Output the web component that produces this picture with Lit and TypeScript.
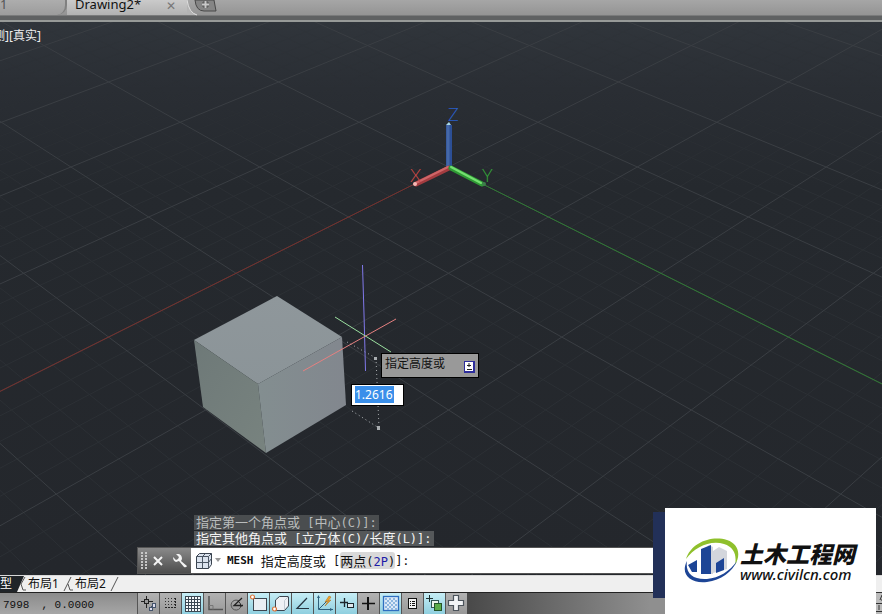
import { LitElement, html, svg, css } from "lit";
import { customElement } from "lit/decorators.js";
import { classMap } from "lit/directives/class-map.js";

/** Splits mixed text so Latin runs use the console face and Han runs the CJK one. */
const mixed = (text: string) =>
  (text.match(/[\x20-\x7e]+|[^\x20-\x7e]+/g) ?? []).map((run) =>
    run.charCodeAt(0) < 128
      ? html`<span class="latin">${run}</span>`
      : html`<span class="han">${run}</span>`
  );

/** Perspective projection of a ground-plane point (u along X, v along Y). */
const project = (u: number, v: number): [number, number] => {
  const s = u + v;
  const w = 1 - 0.0556 * s;
  return [448.5 + (94.4 * (v - u)) / w, (167 + 37.95 * s) / w - 22];
};

const groundLine = (kind: string, a: [number, number], b: [number, number]) => {
  const [x1, y1] = project(...a);
  const [x2, y2] = project(...b);
  return svg`<line class=${kind} x1=${x1} y1=${y1} x2=${x2} y2=${y2} />`;
};

const STEPS = Array.from({ length: 91 }, (_, i) => i - 45);

@customElement("cad-viewport")
class CadViewport extends LitElement {
  static styles = css`
    :host { display: block; width: 100%; height: 100%; }
    svg { display: block; width: 100%; height: 100%; }
    .minor { stroke: #2c3035; stroke-width: 1; }
    .major { stroke: #3a3e43; stroke-width: 1; }
    .x-line { stroke: #77302c; stroke-width: 1; }
    .y-line { stroke: #2f7a33; stroke-width: 1; }
    .dots { fill: none; stroke: #a9adb0; stroke-width: 1; stroke-dasharray: 1 3; }
    text { font: 300 18px Lato, "Open Sans", sans-serif; }
  `;

  render() {
    return svg`
      <svg viewBox="0 0 882 553" preserveAspectRatio="xMidYMid slice" role="img" aria-label="3D">
        <defs>
          <linearGradient id="ground" x1="0" y1="0" x2="0" y2="1">
            <stop offset="0" stop-color="#30353b" />
            <stop offset="0.12" stop-color="#2a2e34" />
            <stop offset="0.3" stop-color="#25292e" />
            <stop offset="1" stop-color="#24272c" />
          </linearGradient>
          <linearGradient id="fade" x1="0" y1="0" x2="0" y2="1">
            <stop offset="0" stop-color="#fff" stop-opacity="0.1" />
            <stop offset="0.3" stop-color="#fff" stop-opacity="1" />
          </linearGradient>
          <mask id="haze"><rect width="882" height="553" fill="url(#fade)" /></mask>
          <linearGradient id="top" x1="0" y1="0" x2="0" y2="1">
            <stop offset="0" stop-color="#8f979b" /><stop offset="1" stop-color="#8b9498" />
          </linearGradient>
          <linearGradient id="left" x1="0" y1="0" x2="1" y2="1">
            <stop offset="0" stop-color="#6e7978" /><stop offset="1" stop-color="#78837f" />
          </linearGradient>
          <linearGradient id="right" x1="0" y1="0" x2="1" y2="0">
            <stop offset="0" stop-color="#838e90" /><stop offset="1" stop-color="#82878e" />
          </linearGradient>
        </defs>
        <rect width="882" height="553" fill="url(#ground)" />
        <g mask="url(#haze)">
          ${STEPS.filter((n) => n % 5 && n < 30).map((n) => [
            groundLine("minor", [n / 5, -8], [n / 5, Math.min(9, 15 - n / 5)]),
            groundLine("minor", [-8, n / 5], [Math.min(9, 15 - n / 5), n / 5]),
          ])}
        </g>
        ${STEPS.filter((n) => n % 5 === 0 && n < 30).map((n) => [
          groundLine("major", [n / 5, -8], [n / 5, 9]),
          groundLine("major", [-8, n / 5], [9, n / 5]),
        ])}
        ${groundLine("x-line", [0, 0], [8, 0])}
        ${groundLine("y-line", [0, 0], [0, 8])}

        <g stroke-linecap="round">
          <path d="M449 146V103" stroke="#2c4f96" stroke-width="6" stroke-linecap="butt" />
          <path d="M448 146V103" stroke="#4568a8" stroke-width="3" stroke-linecap="butt" />
          <path d="M446 103h5l-2-3z" fill="#a9d8e8" />
          <path d="M449 146L416 162" stroke="#a33c40" stroke-width="5" />
          <path d="M448 145L416 161" stroke="#cf6668" stroke-width="2" />
          <circle cx="415" cy="162" r="2" fill="#f5b8b4" />
          <path d="M451 146L482 162" stroke="#2f9a35" stroke-width="5" />
          <path d="M451 145L481 161" stroke="#74e070" stroke-width="2" />
          <circle cx="484" cy="162" r="2" fill="#3d7f4a" />
        </g>
        <text x="448" y="99" fill="#2a5fc8">Z</text>
        <text x="410" y="160" fill="#cf4a48">X</text>
        <text x="482" y="160" fill="#35a83a">Y</text>

        <path d="M194 318L277 274L342 315L258 362Z" fill="url(#top)" />
        <path d="M194 318L258 362L266 431L203 385Z" fill="url(#left)" />
        <path d="M258 362L342 315L346 383L266 431Z" fill="url(#right)" />

        <path class="dots" d="M347 320L376 336" />
        <path class="dots" d="M376 336L379 406" />
        <path class="dots" d="M352 389L379 406" />
        <path d="M374 335h3v3h-3zM377 404h3v4h-3z" fill="#a9adb0" />
        <path d="M362.500 243L364 292L365.500 349" fill="none" stroke="#8078ea" />
        <path d="M303 349L396 297" stroke="#e58080" />
        <path d="M335 295L391 330" stroke="#9be0a0" />
      </svg>`;
  }
}

interface Tool { name: string; on: boolean; art: unknown; }

const TOOLS: Tool[] = [
  { name: "推断约束", on: false, art: svg`<path d="M3 8.500h12M8.500 3v12" stroke="#222"/><rect x="6.500" y="6.500" width="4" height="4" fill="#999" stroke="#222"/><path d="M13 14l2-2" stroke="#44536b"/><rect x="14.500" y="10.500" width="3" height="4" fill="#dde" stroke="#44536b"/><rect x="11.500" y="14.500" width="3" height="3" fill="#dde" stroke="#44536b"/>` },
  { name: "捕捉", on: false, art: svg`<g stroke="#333" stroke-dasharray="1 2"><path d="M5 5.500h10M5 8.500h10M5 11.500h10"/></g><path d="M15.500 5v10M5 14.500h11" stroke="#222" stroke-dasharray="2 1"/>` },
  { name: "栅格", on: true, art: svg`<rect x="3" y="3" width="15" height="15" fill="#f7fafc"/><path d="M3.500 3v15M6.500 3v15M9.500 3v15M12.500 3v15M15.500 3v15M18.500 3v15M3 3.500h16M3 6.500h16M3 9.500h16M3 12.500h16M3 15.500h16M3 18.500h16" stroke="#3b4853"/>` },
  { name: "正交", on: false, art: svg`<path d="M5 3v13.500h14" fill="none" stroke="#555" stroke-width="1.500"/><path d="M5 12.500h4v4" fill="none" stroke="#777"/>` },
  { name: "极轴", on: false, art: svg`<path d="M13 8a5 5 0 1 0 2 5" fill="none" stroke="#555"/><path d="M16 5L8 12.500h9" fill="none" stroke="#222" stroke-width="1.300"/><path d="M12 8q3 2 3 6" fill="none" stroke="#222"/>` },
  { name: "对象捕捉", on: true, art: svg`<rect x="5.500" y="5.500" width="13" height="12" fill="#e9eef3" stroke="#3d4650"/><circle cx="4.500" cy="4" r="2" fill="#fff" stroke="#d9743a" stroke-width="1.200"/>` },
  { name: "三维捕捉", on: true, art: svg`<path d="M5.500 7l4-3.500h9V13l-4 4.500h-9z" fill="#eef1f5" stroke="#3d4650"/><path d="M14.500 17V7.500l4-4" fill="none" stroke="#c2cad2"/><circle cx="4.500" cy="16" r="2" fill="#fff" stroke="#d9743a" stroke-width="1.200"/>` },
  { name: "对象追踪", on: true, art: svg`<path d="M15 5L5 15.500h12" fill="none" stroke="#26333f" stroke-width="1.200"/>` },
  { name: "动态UCS", on: true, art: svg`<path d="M4.500 3v13.500H19M5 16L15 6" fill="none" stroke="#2f5f7c"/><path d="M3 5l1.500-3L6 5M16 15l3 1.500-3 1.500" fill="#2f5f7c"/><path d="M15 3l-4 6 3-1-3 5 6-6-3 1 3-4z" fill="#f2a52c" stroke="#a86a1a" stroke-width="0.500"/>` },
  { name: "动态输入", on: true, art: svg`<path d="M4 9.500h8M8.500 5v9" stroke="#1c242b" stroke-width="1.300"/><rect x="11.500" y="10.500" width="6" height="4" fill="#dfe9ee" stroke="#1c242b"/>` },
  { name: "线宽", on: false, art: svg`<path d="M4 10.500h13" stroke="#111" stroke-width="1.500"/><path d="M10 4v13" stroke="#111" stroke-width="2"/>` },
  { name: "透明度", on: true, art: svg`<rect x="3.500" y="3.500" width="15" height="14" fill="#dbe9f7" stroke="#2e6fc0" stroke-width="1.300"/><g fill="none" stroke="#8cb6df" stroke-width="2" stroke-dasharray="2 2"><path d="M5 6h12M7 8h10M5 10h12M7 12h10M5 14h12M7 16h10"/></g>` },
  { name: "快捷特性", on: false, art: svg`<rect x="6.500" y="5.500" width="8" height="10" fill="#f4f4f4" stroke="#111"/><path d="M8 8.500h1M10 8.500h3M8 10.500h1M10 10.500h3M8 12.500h1M10 12.500h3" stroke="#111"/>` },
  { name: "选择循环", on: true, art: svg`<path d="M2 5.500h7M5.500 2v7" stroke="#233"/><rect x="7.500" y="7.500" width="7" height="7" fill="#eef3ee" stroke="#355"/><rect x="10.500" y="10.500" width="7" height="7" fill="#5cab4b" stroke="#24552a"/>` },
  { name: "注释监视", on: false, art: svg`<path d="M7.500 2.500h5v5h5v5h-5v5h-5v-5h-5v-5h5z" fill="#f2f4f6" stroke="#4c545c" stroke-width="1.200"/>` },
];

@customElement("app-root")
class AppRoot extends LitElement {
  static styles = css`
    :host {
      display: flex;
      flex-direction: column;
      position: relative;
      min-height: 100vh;
      overflow: hidden;
      font-family: "Noto Sans", "Noto Sans CJK SC", sans-serif;
      font-size: 12px;
      color: #111;
    }
    * { box-sizing: border-box; }
    button, input { font: inherit; color: inherit; border: 0; padding: 0; margin: 0; background: none; }
    svg { display: block; }

    .files {
      display: flex;
      height: 22px;
      background: linear-gradient(#a6a6a6 0, #949494 15px, #5f6162 16px 20px, #979a98 20px);
    }
    .file {
      display: flex;
      height: 15px;
      line-height: 8px;
      font-size: 13px;
      white-space: nowrap;
    }
    .first {
      width: 67px;
      color: #555;
      background: linear-gradient(#adadad, #9c9c9c);
      border-radius: 0 0 10px 0;
      border-right: 2px solid #808080;
    }
    .current {
      width: 120px;
      justify-content: space-between;
      padding: 0 11px 0 8px;
      background: linear-gradient(#cacaca, #b2b2b2);
    }
    .cross { color: #777; font-size: 12px; line-height: 6px; height: 12px; }
    .add { width: 32px; height: 16px; }

    .stage { position: relative; flex: 1; min-height: 400px; display: grid; background: #25282d; }
    .view-name {
      position: absolute;
      left: -7px;
      top: 6px;
      line-height: 16px;
      color: #eee;
      white-space: nowrap;
    }
    .hint {
      position: absolute;
      left: 381px;
      top: 331px;
      display: flex;
      justify-content: space-between;
      width: 98px;
      height: 25px;
      padding: 0 3px;
      line-height: 20px;
      background: #999;
      border: 1px solid #000;
      white-space: nowrap;
    }
    .more { align-self: end; margin-bottom: 4px; }
    .value {
      position: absolute;
      left: 351px;
      top: 362px;
      width: 53px;
      height: 22px;
      padding: 1px 3px;
      background: #fff;
      border: 1px solid #000;
    }
    .value input {
      display: block;
      width: 39px;
      height: 17px;
      font-size: 12px;
      line-height: 16px;
      color: #fff;
      background: #3a8fea;
      outline: none;
    }

    .command { position: absolute; left: 137px; right: 217px; bottom: 1px; }
    .log { display: flex; flex-direction: column; align-items: flex-start; gap: 1px; padding: 0 0 1px 57px; }
    .log div {
      height: 15px;
      padding: 0 2px;
      line-height: 14px;
      color: #f4f4f4;
      background: #55585a;
      white-space: pre;
    }
    .log .old { color: #b9bcbc; background: #4a4d4f; }
    .latin { font-family: "DejaVu Sans Mono", monospace; font-size: 12px; white-space: pre; }
    .han { font-family: "Noto Sans CJK SC", sans-serif; font-size: 13px; }
    .prompt { display: flex; height: 27px; background: #fff; border: 1px solid #555; border-right: 0; }
    .grip {
      display: flex;
      align-items: center;
      justify-content: space-between;
      width: 53px;
      padding: 0 4px 0 3px;
      background: linear-gradient(#8a8a8a, #4d4d4d);
    }
    .grip button { margin-right: 4px; }
    .grip button:last-child { margin-right: 0; }
    .line { display: flex; align-items: center; padding-left: 5px; line-height: 20px; white-space: pre; }
    .line svg { margin-right: 5px; }
    .name { font-weight: bold; font-size: 11px; }
    .option { background: #d9d9d9; border-radius: 3px; height: 17px; line-height: 17px; }
    .key { font-family: "DejaVu Sans Mono", monospace; font-size: 12px; color: #1c1ca8; }

    .layouts { display: flex; height: 17px; background: #efefef; border-top: 1px solid #d8d8d8; }
    .layouts button { display: flex; line-height: 16px; font-size: 12px; white-space: nowrap; }
    .model { width: 14px; color: #fff; background: #202428; }

    .status {
      display: flex;
      height: 22px;
      border-top: 1px solid #222;
      background: linear-gradient(90deg, #4a4a4a 470px, #8f8f8f 650px);
    }
    .coords {
      display: flex;
      gap: 12px;
      width: 137px;
      padding-left: 3px;
      font-family: "Liberation Mono", monospace;
      font-size: 11px;
      line-height: 24px;
      white-space: pre;
      background: linear-gradient(#8b8b8b, #a6a6a6);
    }
    .tool {
      width: 22px;
      height: 21px;
      border-left: 1px solid #555;
      background: linear-gradient(#b2b2b2, #989898);
    }
    .tool.on { background: linear-gradient(#c6edf5, #8fcfdf); }

    .brand { position: absolute; right: 6px; bottom: 0; display: flex; width: 223px; height: 106px; }
    .edge { width: 12px; height: 86px; margin-top: 4px; background: #223058; }
    .card {
      flex: 1;
      display: flex;
      align-items: center;
      padding-left: 18px;
      text-decoration: none;
      color: #111;
      background: #fff;
    }
    .words { display: flex; flex-direction: column; white-space: nowrap; }
    .title { font: italic 900 23px/26px "Noto Sans CJK SC", sans-serif; }
    .site { font: italic 500 15px/16px "Noto Sans", sans-serif; }
    .corner { position: absolute; right: 0; bottom: 0; }
  `;

  render() {
    return html`
      <nav class="files">
        <button class="file first">1</button>
        <div class="file current"><span>Drawing2*</span><button class="cross" aria-label="关闭">✕</button></div>
        <button class="add" aria-label="新建">
          <svg width="32" height="16" viewBox="0 0 32 16">
            <path d="M0 0q2 13 10 15H0z" fill="#b4b4b4" />
            <path d="M0 0q2 13 10 15" fill="none" stroke="#e0e0e0" />
            <path d="M8 0q1 11 9 11h12l-2-11z" fill="#858585" stroke="#484848" />
            <path d="M15 4.500h7M18.500 1v7" stroke="#555" stroke-width="4" />
            <path d="M15 4.500h7M18.500 1v7" stroke="#c8c8c8" stroke-width="2" />
          </svg>
        </button>
      </nav>

      <main class="stage">
        <cad-viewport></cad-viewport>
        <span class="view-name">测][真实]</span>
        <div class="hint">
          <label for="height">指定高度或</label>
          <svg class="more" width="11" height="12" viewBox="0 0 11 12">
            <rect width="11" height="12" fill="#2d2d9c" /><rect x="1" y="1" width="8" height="9" fill="#fff" />
            <path d="M5 2v4M3 4.500h4M3 8.500h5" stroke="#222" />
          </svg>
        </div>
        <div class="value"><input id="height" value="1.2616" /></div>

        <section class="command">
          <div class="log">
            <div class="old">${mixed("指定第一个角点或 [中心(C)]:")}</div>
            <div>${mixed("指定其他角点或 [立方体(C)/长度(L)]:")}</div>
          </div>
          <div class="prompt">
            <div class="grip">
              <svg width="6" height="18" viewBox="0 0 6 18">
                <path d="M1 0v18M5 0v18" stroke="#c8c8c8" stroke-width="2" stroke-dasharray="2 1" />
              </svg>
              <button aria-label="关闭">
                <svg width="10" height="10" viewBox="0 0 10 10"><path d="M1 1l8 8M9 1L1 9" stroke="#f4f4f4" stroke-width="2" /></svg>
              </button>
              <button aria-label="自定义">
                <svg width="14" height="14" viewBox="0 0 14 14">
                  <path d="M3 0l3 3-1 2-2 1-3-3q0 4 3 5l3-1 5 6q2 1 3-1L8 7l1-2q0-4-3-5z" fill="#f4f4f4" />
                </svg>
              </button>
            </div>
            <div class="line">
              <svg width="26" height="18" viewBox="0 0 26 18">
                <path d="M.500 4.500l3-3h12v11l-3 4h-12z" fill="#dbe3ee" stroke="#39424e" />
                <path d="M.500 4.500h12v12M12.500 4.500l3-3M6.500 4.500v12M.500 10.500h12l3-4M6.500 4.500l3-3" fill="none" stroke="#4b5664" />
                <path d="M19 6h6l-3 4z" fill="#999" />
              </svg>
              <span class="latin name">MESH</span>${mixed(" 指定高度或 [")}<span class="option">${mixed("两点(")}<span class="key">2P</span>${mixed(")")}</span>${mixed("]:")}
            </div>
          </div>
        </section>
      </main>

      <nav class="layouts">
        <button class="model">型</button>
        <svg width="14" height="16" viewBox="0 0 14 16"><path d="M0 0h10L3 16H0z" fill="#202428" /><path d="M11 1L7 8l2 6h3" fill="none" stroke="#555" /></svg>
        <button>布局1</button>
        <svg width="16" height="16" viewBox="0 0 16 16"><path d="M12 1L5 15M9 8l2 6h3" fill="none" stroke="#555" /></svg>
        <button>布局2</button>
        <svg width="16" height="16" viewBox="0 0 16 16"><path d="M12 1L5 15" stroke="#555" /></svg>
      </nav>

      <footer class="status">
        <div class="coords"><span>7998</span><span>, 0.0000</span></div>
        ${TOOLS.map(
          (t) => html`<button class=${classMap({ tool: true, on: t.on })} aria-label=${t.name}>
            <svg width="21" height="21" viewBox="0 0 21 21">${t.art}</svg>
          </button>`
        )}
      </footer>

      <svg class="corner" width="6" height="22" viewBox="0 0 6 22">
        <rect width="6" height="22" fill="#bbb" /><path d="M0 .500h6M0 11.500h6M0 19.500h6M3 13v5M4 8l2-5M5 8h1" stroke="#333" />
      </svg>
      <div class="brand">
        <div class="edge"></div>
        <a class="card" href="#">
          <svg width="57" height="48" viewBox="0 0 57 48">
            <path d="M18 37V14l8-6 4 2v27zM30 36V14l6-4 8 4v18z" fill="#d3d6dc" />
            <path d="M5 28l9-5v12H9zM18 12l10-4v29H18zM33 26l8-5v12l-8 3z" fill="#1d4596" />
            <path d="M3 22C8 6 28-2 44 3c12 4 14 15 8 25 2-10-1-18-11-21C27 3 12 10 3 22z" fill="#8fc02c" />
            <path d="M4 24C-3 37 7 47 24 45c14-2 25-10 30-21-7 10-18 17-30 18C10 43 2 36 4 24z" fill="#1d4596" />
          </svg>
          <span class="words"><span class="title">土木工程网</span><span class="site">www.civilcn.com</span></span>
        </a>
      </div>
    `;
  }
}
